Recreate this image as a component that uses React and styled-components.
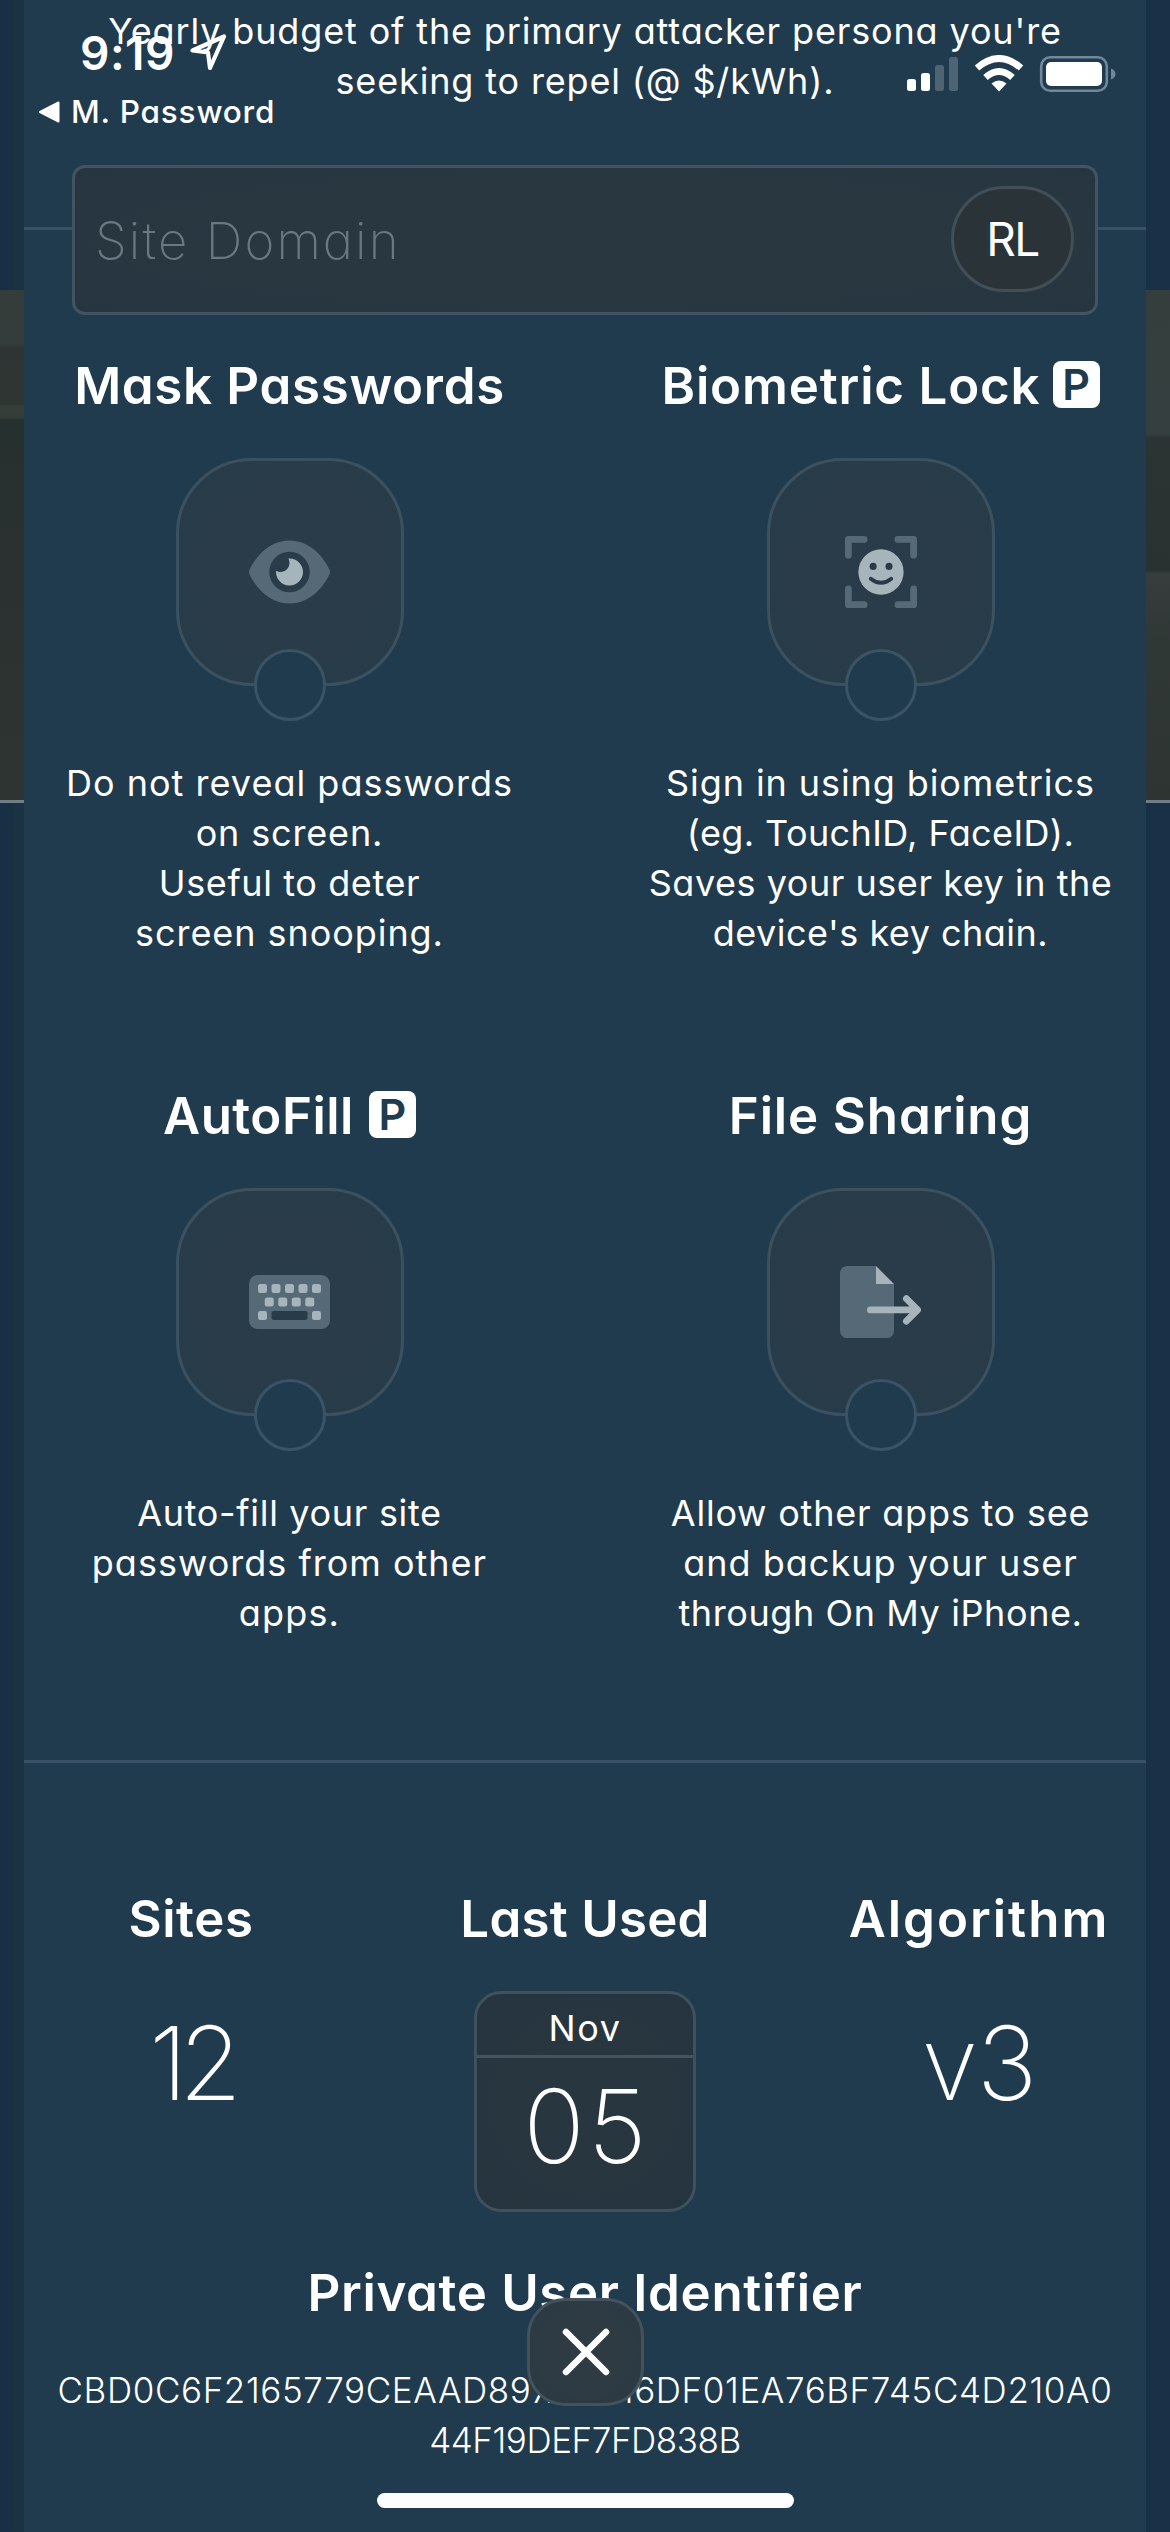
import React from "react";
import styled, { createGlobalStyle } from "styled-components";

const PANEL = "#213b4e";
const LINE = "#385166";
const DULL = "#566977";
const BRIGHT = "#a6b4bc";

const GlobalStyle = createGlobalStyle`
  *, *::before, *::after { box-sizing: border-box; }
  body {
    margin: 0;
    background: #1a3144;
    color: #fff;
    font-family: Inter, Roboto, "Liberation Sans", sans-serif;
    font-feature-settings: "cv11";
  }
  svg { display: block; }
`;

const Screen = styled.main`
  position: relative;
  display: flex;
  width: 1170px;
  height: 2532px;
  overflow: hidden;
`;

const Edge = styled.div`
  display: flex;
  flex-direction: column;
  flex: 0 0 24px;
  background: ${(p) =>
    p.$right ? "#1a3046" : "linear-gradient(90deg, #192f46 0 8px, #1a3242 16px)"};
`;

const EdgePhoto = styled.div`
  height: 513px;
  margin-top: 290px;
  border-bottom: 3px solid #6d7f86;
  background: ${(p) =>
    p.$right
      ? "linear-gradient(#353e3c 0, #343f3f 144px, #2b3433 148px, #293231 280px, #363d3c 284px, #303836 350px, #2d3431 100%)"
      : "linear-gradient(#353c39 0, #343c3c 54px, #2d3433 58px, #2e3532 114px, #363e3a 116px, #353d39 127px, #26302f 130px, #2b3130 300px, #2c3330 420px, #2e3432 100%)"};
`;

const Panel = styled.section`
  display: flex;
  flex-direction: column;
  flex: 1;
  padding-top: 6px;
  background: ${PANEL};
`;

const Text = styled.p`
  display: flex;
  flex-direction: column;
  align-items: center;
  margin: 0;
  font-size: ${(p) => p.$size || 36}px;
  line-height: 50.3px;
  font-weight: ${(p) => p.$weight || 400};
`;

const Line = styled.span`
  white-space: nowrap;
  letter-spacing: ${(p) => p.$track || 0}px;
`;

const Features = styled.div`
  display: grid;
  grid-template-columns: 1fr 1fr;
  gap: 127px 60px;
  margin-top: 120px;
  padding: 126px 0 121px;
  border-top: 3px solid ${LINE};
  border-bottom: 3px solid ${LINE};
`;

const Column = styled.div`
  display: flex;
  flex-direction: column;
  align-items: center;
`;

const Heading = styled.h2`
  display: flex;
  align-items: center;
  gap: ${(p) => p.$gap || 0}px;
  margin: 0;
  height: 60px;
  line-height: 60px;
  font-size: 51px;
  font-weight: 600;
  white-space: nowrap;
  letter-spacing: ${(p) => p.$track}px;
`;

const Badge = styled.span`
  display: flex;
  align-items: center;
  justify-content: center;
  width: 47px;
  height: 47px;
  margin-bottom: 3px;
  border-radius: 8px;
  background: #fff;
  color: ${PANEL};
  font-size: 43px;
  line-height: 47px;
  letter-spacing: 0;
`;

const Toggle = styled.div`
  position: relative;
  display: flex;
  align-items: center;
  justify-content: center;
  width: 228px;
  height: 228px;
  margin: 42px 0 72px;
  border: 3px solid #3c515f;
  border-radius: 76px;
  background: radial-gradient(circle, #2a3c49 45%, #273b49 90%);
`;

const Knob = styled.span`
  position: absolute;
  left: 50%;
  bottom: -38px;
  width: 72px;
  height: 72px;
  margin-left: -36px;
  border: 3px solid #3a5365;
  border-radius: 50%;
  background: ${PANEL};
`;

const Stats = styled.div`
  display: grid;
  grid-template-columns: repeat(3, 1fr);
  gap: 60px;
  padding: 126px 0 51px;
`;

const BigValue = styled.div`
  margin-top: ${(p) => p.$top || 0}px;
  padding-left: ${(p) => p.$nudge || 0}px;
  font-size: 102px;
  line-height: 120px;
  font-weight: 250;
  letter-spacing: ${(p) => p.$track || 0}px;
`;

const Calendar = styled.div`
  display: flex;
  flex-direction: column;
  width: 222px;
  height: 221px;
  margin-top: 42px;
  border: 3px solid #3f515c;
  border-radius: 27px;
  background: radial-gradient(#283640 40%, #25343e 100%);
  text-align: center;
`;

const Month = styled.div`
  height: 64px;
  padding-top: 6px;
  border-bottom: 3px solid #42545e;
  font-size: 36px;
  line-height: 56px;
  letter-spacing: 1.6px;
`;

const StatusBar = styled.header`
  position: absolute;
  top: 0;
  left: 0;
  display: flex;
  justify-content: space-between;
  width: 1170px;
  padding: 30px 54px 0 38px;
`;

const Clock = styled.div`
  display: flex;
  gap: 13px;
  padding-left: 42px;
  font-size: 46px;
  line-height: 46px;
  font-weight: 600;
  letter-spacing: 0.5px;
`;

const BackLink = styled.div`
  display: flex;
  align-items: center;
  gap: 11px;
  margin-top: 20px;
  font-size: 31.5px;
  line-height: 32px;
  font-weight: 500;
  letter-spacing: 0.8px;
`;

const Indicators = styled.div`
  padding-top: 25px;
`;

const SearchField = styled.div`
  position: absolute;
  top: 165px;
  left: 72px;
  display: flex;
  align-items: center;
  justify-content: space-between;
  width: 1026px;
  height: 150px;
  padding: 0 21px 2px 20px;
  border: 3px solid #41545f;
  border-radius: 13px;
  background: radial-gradient(#293741 50%, #26353f 100%);
`;

const Placeholder = styled.span`
  padding-top: 2px;
  font-size: 51px;
  font-weight: 200;
  letter-spacing: 2.1px;
  color: #6a7881;
`;

const Avatar = styled.span`
  display: flex;
  align-items: center;
  justify-content: center;
  width: 123px;
  height: 106px;
  border: 3px solid #424f56;
  border-radius: 53px;
  background: #2a3338;
  font-size: 46px;
  letter-spacing: -1.5px;
`;

const CloseButton = styled.button`
  position: absolute;
  top: 2298px;
  left: 527px;
  display: flex;
  align-items: center;
  justify-content: center;
  width: 117px;
  height: 108px;
  padding: 0;
  border: 3px solid #43525b;
  border-radius: 38px;
  background: radial-gradient(#2e3b43 40%, #2a3a43 100%);
`;

const HomeIndicator = styled.div`
  position: absolute;
  top: 2493px;
  left: 377px;
  width: 417px;
  height: 15px;
  border-radius: 8px;
  background: #fdfdff;
`;

const Identifier = styled.div`
  margin-top: 42px;
`;

const EyeIcon = () => (
  <svg width="81" height="72" viewBox="0 0 576 512">
    <path
      fill={DULL}
      fillRule="evenodd"
      d="M288 32c-80.8 0-145.5 36.8-192.6 80.6C48.6 156 17.3 208 2.5 243.7c-3.3 7.9-3.3 16.7 0 24.6C17.3 304 48.6 356 95.4 399.4C142.5 443.2 207.2 480 288 480s145.5-36.8 192.6-80.6c46.8-43.5 78.1-95.4 93-131.1c3.3-7.9 3.3-16.7 0-24.6c-14.9-35.7-46.2-87.7-93-131.1C433.5 68.8 368.8 32 288 32zM144 256a144 144 0 1 1 288 0a144 144 0 1 1-288 0z"
    />
    <path
      fill={BRIGHT}
      d="M288 192c0 35.3-28.7 64-64 64c-11.5 0-22.3-3-31.6-8.4c-.2 2.8-.4 5.5-.4 8.4c0 53 43 96 96 96s96-43 96-96s-43-96-96-96c-2.8 0-5.6.1-8.4.4c5.3 9.3 8.4 20.1 8.4 31.6z"
    />
  </svg>
);

const FaceIcon = () => (
  <svg width="72" height="72" viewBox="0 0 512 512">
    <g fill="none" stroke={DULL} strokeWidth="48" strokeLinecap="round" strokeLinejoin="round">
      <path d="M24 136V24H136M376 24H488V136M488 376V488H376M136 488H24V376" />
    </g>
    <circle cx="256" cy="256" r="161" fill={BRIGHT} />
    <circle cx="200" cy="216" r="25" fill="#293b48" />
    <circle cx="313" cy="216" r="25" fill="#293b48" />
    <path d="M183 304Q256 362 329 304" fill="none" stroke="#293b48" strokeWidth="27" strokeLinecap="round" />
  </svg>
);

const KEYS = [
  [64, 128], [160, 128], [256, 128], [352, 128], [448, 128],
  [112, 224], [208, 224], [304, 224], [400, 224],
  [64, 320], [448, 320],
];

const KeyboardIcon = () => (
  <svg width="81" height="72" viewBox="0 0 576 512">
    <rect y="64" width="576" height="384" rx="62" fill={DULL} />
    {KEYS.map(([x, y]) => (
      <rect key={`${x}-${y}`} x={x} y={y} width="64" height="64" rx="16" fill={BRIGHT} />
    ))}
    <rect x="160" y="320" width="256" height="64" rx="16" fill="#293b48" />
  </svg>
);

const FileIcon = () => (
  <svg width="81" height="72" viewBox="0 0 576 512">
    <path fill={DULL} d="M0 56Q0 0 56 0H256V128H384V456Q384 512 328 512H56Q0 512 0 456Z" />
    <path fill={BRIGHT} d="M256 0L384 128H256Z" />
    <path
      fill="none"
      stroke={BRIGHT}
      strokeWidth="48"
      strokeLinecap="round"
      strokeLinejoin="round"
      d="M216 312H550M472 232L552 312L472 392"
    />
  </svg>
);

const LocationIcon = () => (
  <svg width="40" height="40" viewBox="0 0 40 40">
    <path
      d="M4.5 20.5L36 6.5L22 38L20 22.5Z"
      fill="none"
      stroke="#fff"
      strokeWidth="4.2"
      strokeLinejoin="round"
    />
  </svg>
);

const BackArrow = () => (
  <svg width="22" height="22" viewBox="0 0 22 22">
    <path d="M2 11L20.5 1.5V20.5Z" fill="#fff" stroke="#fff" strokeWidth="2" strokeLinejoin="round" />
  </svg>
);

const StatusIcons = () => (
  <svg width="209" height="38" viewBox="907 55 209 38">
    <rect x="907" y="79" width="9" height="12" rx="2.5" fill="#fff" />
    <rect x="921" y="73" width="9" height="18" rx="2.5" fill="#fff" />
    <rect x="935" y="65" width="9" height="26" rx="2.5" fill="#4f6473" />
    <rect x="949" y="57" width="9" height="34" rx="2.5" fill="#4f6473" />
    <g fill="none" stroke="#fff" strokeWidth="6.8">
      <path d="M977 68Q999 49 1021 68" />
      <path d="M985.5 77.5Q999 65.5 1012.5 77.5" />
    </g>
    <path d="M999 91.5L991.5 83.5Q999 77.5 1006.5 83.5Z" fill="#fff" />
    <rect x="1041.2" y="57.2" width="65.6" height="33.6" rx="9" fill="none" stroke="#70889a" strokeWidth="2.6" />
    <rect x="1046" y="62" width="56" height="24" rx="5" fill="#fff" />
    <path d="M1111 68.5Q1115.5 70.5 1115.5 74T1111 79.5Z" fill="#70889a" />
  </svg>
);

const FEATURES = [
  {
    title: "Mask Passwords",
    track: 0.68,
    Icon: EyeIcon,
    lines: [
      ["Do not reveal passwords", 1.02],
      ["on screen.", 0.85],
      ["Useful to deter", 0.6],
      ["screen snooping.", 0.94],
    ],
  },
  {
    title: "Biometric Lock",
    track: 0.83,
    premium: 12,
    Icon: FaceIcon,
    lines: [
      ["Sign in using biometrics", 0.91],
      ["(eg. TouchID, FaceID).", 0.4],
      ["Saves your user key in the", 0.54],
      ["device's key chain.", 0.49],
    ],
  },
  {
    title: "AutoFill",
    track: 0.5,
    premium: 15,
    Icon: KeyboardIcon,
    lines: [
      ["Auto-fill your site", 0.69],
      ["passwords from other", 1],
      ["apps.", 1.17],
    ],
  },
  {
    title: "File Sharing",
    track: 0.85,
    Icon: FileIcon,
    lines: [
      ["Allow other apps to see", 0.78],
      ["and backup your user", 1.02],
      ["through On My iPhone.", 0.6],
    ],
  },
];

const Lines = ({ items, weight, size }) => (
  <Text $weight={weight} $size={size}>
    {items.map(([text, track]) => (
      <Line key={text} $track={track}>{text}</Line>
    ))}
  </Text>
);

const Feature = ({ title, track, premium, Icon, lines }) => (
  <Column>
    <Heading $track={track} $gap={premium}>
      {title}
      {premium && <Badge>P</Badge>}
    </Heading>
    <Toggle>
      <Icon />
      <Knob />
    </Toggle>
    <Lines items={lines} />
  </Column>
);

export default function App() {
  return (
    <Screen>
      <GlobalStyle />
      <Edge><EdgePhoto /></Edge>
      <Panel>
        <Lines
          items={[
            ["Yearly budget of the primary attacker persona you're", 0.86],
            ["seeking to repel (@ $/kWh).", 0.85],
          ]}
        />
        <Features>
          {FEATURES.map((f) => <Feature key={f.title} {...f} />)}
        </Features>
        <Stats>
          <Column>
            <Heading $track={0.6}>Sites</Heading>
            <BigValue $top={54} $track={-9}>12</BigValue>
          </Column>
          <Column>
            <Heading $track={0.25}>Last Used</Heading>
            <Calendar>
              <Month>Nov</Month>
              <BigValue $top={8} $track={3} $nudge={3}>05</BigValue>
            </Calendar>
          </Column>
          <Column>
            <Heading $track={2}>Algorithm</Heading>
            <BigValue $top={54} $track={-1}>v3</BigValue>
          </Column>
        </Stats>
        <Column>
          <Heading $track={0.67}>Private User Identifier</Heading>
          <Identifier>
            <Lines
              weight={300}
              size={35}
              items={[
                ["CBD0C6F2165779CEAAD897A4D16DF01EA76BF745C4D210A0", 0.6],
                ["44F19DEF7FD838B", -0.44],
              ]}
            />
          </Identifier>
        </Column>
      </Panel>
      <Edge $right><EdgePhoto $right /></Edge>

      <SearchField>
        <Placeholder>Site Domain</Placeholder>
        <Avatar>RL</Avatar>
      </SearchField>
      <StatusBar>
        <div>
          <Clock>9:19<LocationIcon /></Clock>
          <BackLink><BackArrow />M. Password</BackLink>
        </div>
        <Indicators><StatusIcons /></Indicators>
      </StatusBar>
      <CloseButton aria-label="Close">
        <svg width="48" height="48" viewBox="0 0 48 48">
          <path d="M4 4L44 44M44 4L4 44" stroke="#fff" strokeWidth="6.5" strokeLinecap="round" />
        </svg>
      </CloseButton>
      <HomeIndicator />
    </Screen>
  );
}
